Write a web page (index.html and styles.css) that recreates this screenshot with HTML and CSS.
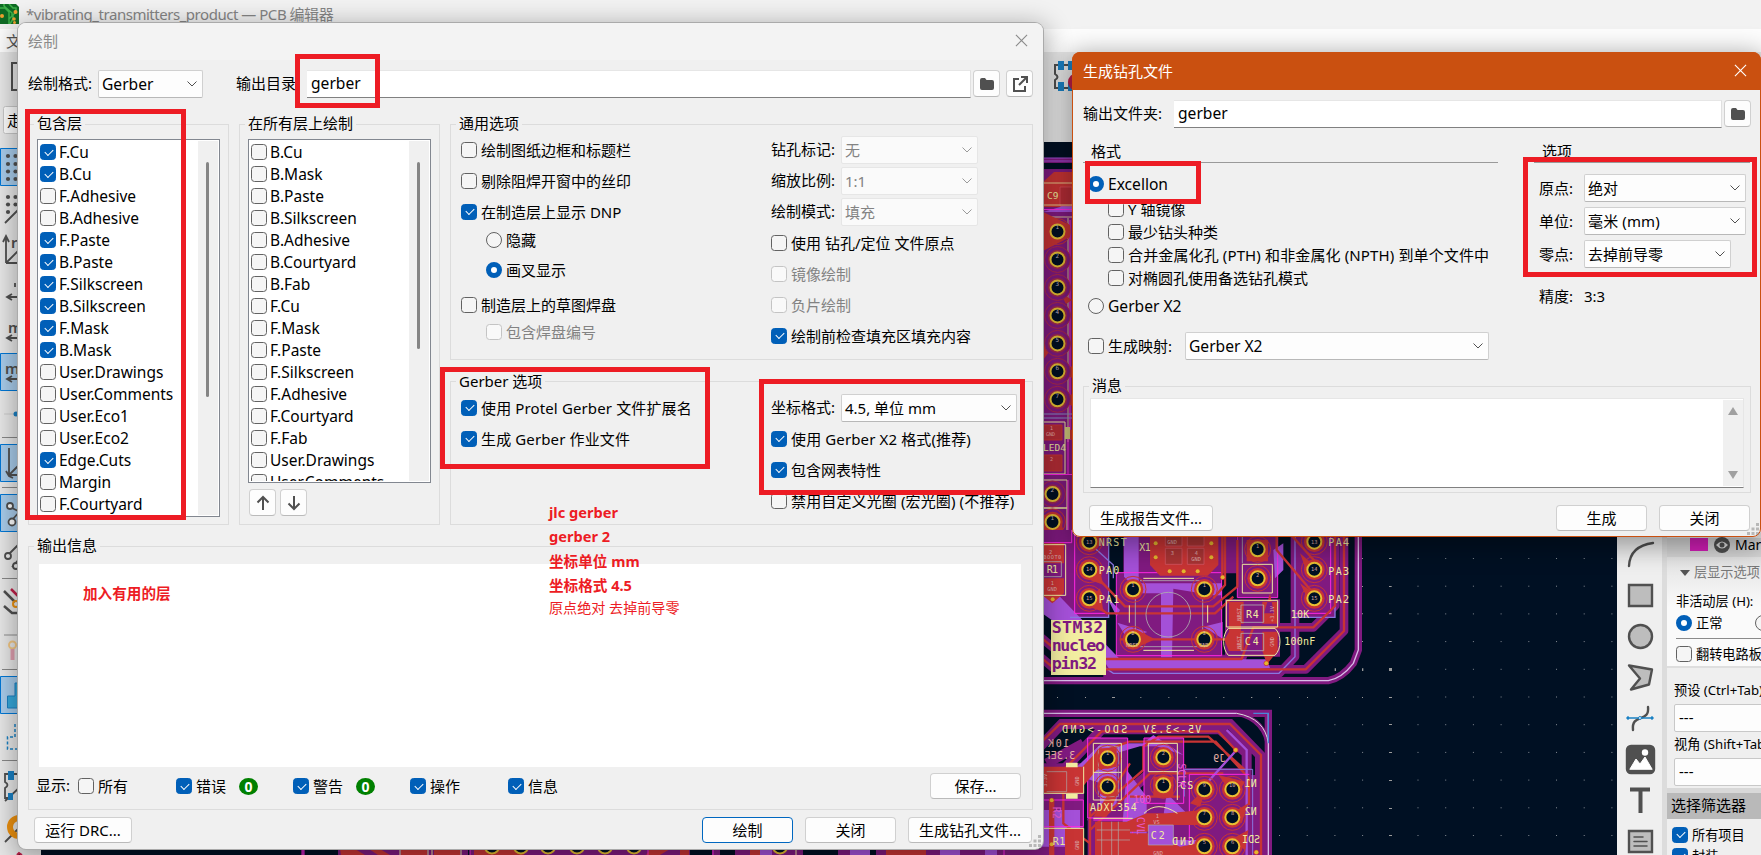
FILE: index.html
```html
<!DOCTYPE html>
<html lang="zh-CN">
<head>
<meta charset="utf-8">
<title>PCB 编辑器</title>
<link rel="stylesheet" href="styles.css">
</head>
<body>
<svg class="defs" width="0" height="0" aria-hidden="true">
  <defs>
    <g id="pad"><circle r="39" fill="none" stroke="#c83434" stroke-width="3"/><circle r="31" fill="#c83434"/><circle r="21" fill="#001023" stroke="#e8c033" stroke-width="6"/></g>
    <g id="hole"><circle r="39" fill="#801a80" stroke="#b02b4a" stroke-width="3"/><circle r="29" fill="#a02a50"/><circle r="21" fill="#001023" stroke="#e8c033" stroke-width="6"/></g>
    <g id="via"><circle r="8" fill="#c83434"/><circle r="6" fill="#e3b72e"/></g>
    <symbol id="folder" viewBox="0 0 14 14"><path d="M0 3q0-2 2-2h3l1.500 2H12q2 0 2 2v6q0 2-2 2H2q-2 0-2-2z" fill="#505050"/></symbol>
    <symbol id="chev" viewBox="0 0 10 6"><path d="M.5.5 5 5 9.500.5" fill="none" stroke="currentColor" stroke-width="1"/></symbol>
    <symbol id="close" viewBox="0 0 14 14"><path d="M1 1l12 12M13 1 1 13" fill="none" stroke="currentColor" stroke-width="1.200"/></symbol>
    <symbol id="grip" viewBox="0 0 12 12"><path d="M9 0h3v3H9zM9 4.500h3v3H9zM4.500 4.500h3v3h-3zM9 9h3v3H9zM4.500 9h3v3h-3zM0 9h3v3H0z" fill="#b8b8b8"/></symbol>
  </defs>
</svg>
<div class="desktop">
  <div class="app">
    <header class="app-title">
      <svg class="app-icon" width="19" height="20" viewBox="0 0 19 20"><path d="M0 0h16l3 3v17H0z" fill="#0f6b24"/><path d="M0 4h5l4 4v12M4 0v2l8 7v3l-3 3M9 0l4 4h3v4l-3 3v4l-3 5" fill="none" stroke="#3fb24a" stroke-width="1.500"/><g fill="#f0a030"><circle cx="2" cy="12" r="2"/><circle cx="15.500" cy="8" r="2"/><circle cx="14" cy="15" r="1.800"/><circle cx="14.500" cy="18.500" r="1.500"/></g></svg>
      <span>*vibrating_transmitters_product — PCB 编辑器</span>
    </header>
    <nav class="app-menu">文</nav>
    <div class="app-tools">
      <svg width="1761" height="90" viewBox="0 52 1761 90">
        <path d="M20 63h-8v27h8" fill="none" stroke="#505050" stroke-width="2"/>
        <path d="M1043.500 59v34M1043 142.500h40" stroke="#858585"/>
        <path d="M1074 65h-19v9q5 3 0 6v8h19" fill="none" stroke="#505050" stroke-width="2"/>
        <path d="M1058 61h6v9h-6zM1068 61h6v9h-6zM1058 82h6v9h-6zM1068 82h6v9h-6z" fill="#1a81c4"/>
        <circle cx="1077" cy="82" r="9" fill="#c0204a"/>
        <rect x="3.500" y="106.500" width="60" height="27" rx="2" fill="#fdfdfd" stroke="#c8c8c8"/>
      </svg>
      <span class="tool-combo">走</span>
    </div>
    <main class="app-main">
      <svg class="left-tools" width="41" height="713" viewBox="0 142 41 713">
        <g fill="#a9cdec" stroke="#0078d7"><path d="M.5 148.500h40v37H.5zM.5 353.500h40v37H.5zM.5 444.500h40v37H.5zM.5 494.500h40v37H.5zM.5 676.500h40v37H.5z"/></g>
        <g fill="#505050"><circle cx="8" cy="156" r="2.100"/><circle cx="15.500" cy="156" r="2.100"/><circle cx="8" cy="164" r="2.100"/><circle cx="15.500" cy="164" r="2.100"/><circle cx="8" cy="171.500" r="2.100"/><circle cx="15.500" cy="171.500" r="2.100"/><circle cx="8" cy="179" r="2.100"/><circle cx="15.500" cy="179" r="2.100"/><circle cx="8" cy="197" r="2.100"/><circle cx="15.500" cy="197" r="2.100"/><circle cx="8" cy="204.500" r="2.100"/><circle cx="15.500" cy="204.500" r="2.100"/><circle cx="8" cy="212" r="2.100"/></g>
        <g fill="none" stroke="#505050" stroke-width="1.800"><path d="M5 223l14-14M6 263v-24M3 242l3-6 3 6M6 263h14M7 262l13-13M15 283v4M20 297H8M12 294l-5 3 5 3M20 338H8M12 335l-5 3 5 3M20 379H8M12 376l-5 3 5 3M9 448v27h10M9 475l10-10M6 471l3 5 4 2"/><path d="M12 508l8 4M13 519l7-8M7 556l13-13M12 567l8-9"/><circle cx="10" cy="506" r="3" fill="#fff"/><circle cx="12" cy="522" r="3.500" fill="#fff"/><circle cx="8" cy="556" r="3" fill="#eee"/><circle cx="16" cy="566" r="3" fill="#eee"/><path d="M4 591l11 11M4 606l8 7h8" stroke-width="2.500"/><path d="M20 774H5v8q5 3 0 6v10h5M5 801l15-14M5 842l15-15"/></g>
        <path d="M2 437.500h18M2 487.500h18M2 578.500h18M2 669.500h18M2 760.500h18" stroke="#888"/>
        <path d="M11 589l9 9" stroke="#c0204a" stroke-width="2.500"/><circle cx="16" cy="604" r="3" fill="none" stroke="#ee9210" stroke-width="2"/>
        <path d="M4 635h16" stroke="#bbb" stroke-width="2"/><circle cx="12.500" cy="645" r="3.500" fill="none" stroke="#f3c885" stroke-width="2"/><path d="M12.500 649v11" stroke="#e0a0b0" stroke-width="4"/>
        <path d="M20 683h-5v13H7.500v12H20z" fill="#36a9dc" stroke="#1a81c4"/><path d="M20 724h-5v13H7.500v12H20z" fill="none" stroke="#1a81c4" stroke-width="1.500" stroke-dasharray="3 2"/>
        <path d="M8 771h6v9H8zM17 771h5v9h-5zM8 793h5v7H8z" fill="#1a81c4"/><circle cx="19" cy="827" r="9" fill="none" stroke="#ee9210" stroke-width="6"/>
        <path d="M4 414h16" stroke="#ccc"/><circle cx="16" cy="414" r="2.500" fill="#1a81c4"/><path d="M17 855l2-2 3 2" stroke="#c0204a" stroke-width="2"/>
        <text x="11" y="248" class="unit">r</text><text x="8" y="333" class="unit">m</text><text x="5" y="374" class="unit">m</text>
      </svg>
      <svg class="board" width="1576" height="713" viewBox="41 142 1576 713">
        <rect x="41" y="142" width="1576" height="713" fill="#001023"/>
        <!-- header strip beside the drill dialog -->
        <g>
          <path d="M1043 158h29v382h-29z" fill="#801a80"/>
          <path d="M1043 158h29M1043 161h29" stroke="#a450d8"/><path d="M1043 163h29v6h-29z" fill="#001023"/>
          <path d="M1043 182l11-10h18v35h-29z" fill="#c83434"/>
          <path d="M1043 212h29v-14l-12 9z" fill="#a450d8"/>
          <path d="M1060 187h12v19h-12z" fill="#b52d36" stroke="#e05060" stroke-width=".7"/>
          <path d="M1043 183h29M1043 205h29M1068 218v224M1043 217h29" fill="none" stroke="#f2eda1" stroke-width=".8"/>
          <path d="M1043 209.500h29M1070 220v220" stroke="#ff26e2" stroke-width="1" fill="none"/>
          <path d="M1043 212l27 13v12l-27 14zM1072 440v-10l-29-8v6zM1072 300l-12-8 6 12zM1043 360l12-16h-12zM1072 366l-9 6 9 6zM1072 394l-9 6 9 6z" fill="#c83434"/>
          <g transform="translate(1057.500 231.500) scale(.333)"><use href="#pad"/><use href="#hole" y="84"/><use href="#hole" y="168"/><use href="#hole" y="252"/><use href="#hole" y="336"/><use href="#hole" y="420"/><use href="#hole" y="504"/></g>
          <path d="M1043 414h29M1043 418h29" stroke="#8a8fc8" fill="none"/>
          <path d="M1043 422h22v52h-22zM1043 480h24v28h-24M1043 508h24v31h-24" fill="#801a80" stroke="#f2eda1"/>
          <path d="M1043 425h19v15h-19zM1043 455h19v16h-19z" fill="#b52d36" stroke="#c83434"/>
          <path d="M1068 426v48M1043 474.500h29M1068 480v60M1043 540h29" stroke="#ff26e2" fill="none"/>
          <rect x="1065" y="427" width="5" height="12" fill="#d6cd7e"/>
          <path d="M1044 515h16l4 20-9 16-12-10z" fill="#c83434"/>
          <g transform="translate(1052.500 494) scale(.333)"><use href="#hole"/><use href="#pad" y="84"/></g>
          <text x="1047" y="199" class="silk s9">C9</text><text x="1043" y="451" class="silk s9">LED4</text>
          <text x="1046" y="436" class="fine4">GND</text><text x="1050" y="430" class="fine4">1</text><text x="1050" y="461" class="fine4">2</text>
          <g class="pin-no"><text x="1055.500" y="229">1</text><text x="1055.500" y="258">2</text><text x="1055.500" y="286">3</text><text x="1055.500" y="314">4</text><text x="1055.500" y="342">5</text><text x="1055.500" y="370">6</text><text x="1055.500" y="398">7</text><text x="1050.500" y="492">2</text><text x="1050.500" y="520">1</text></g>
        </g>
        <g transform="translate(1040 530) scale(.33333)">
          <!-- upper board -->
          <path d="M0 0h955v360q-8 60-48 82-20 12-45 10H0z" fill="#001023"/>
          <g fill="none" stroke="#801a80" stroke-linejoin="round">
            <path d="M0 452H865Q905 445 940 400L955 360V0" stroke-width="22"/>
            <path d="M0 320 80 387H605L640 292H820L885 228V0M0 380 45 418H797L912 303V0M190 430H718L765 380V0" stroke-width="26"/>
          </g>
          <g fill="#801a80"><path d="M0 0h205v262H100L0 210zM230 128h316v249H230zM594 0h118v203H594zM102 0h104v262H102zM765 0h120v262H765zM555 208h165v172H555zM250 0h340v130H250zM35 270h165v165H35z"/></g>
          <g fill="#a450d8"><path d="M252 0h44v160h250v36H520l-120-20-4 206h-33V190H300l-48-50zM0 190l60 10 180 188h440l10 26-60 6H210l-36-52L0 245zM232 278l90 28-60 20zM490 290l58-14v50zM700 60l30-20v80l-25 25zM200 200l40 40-10 20z"/></g>
          <g fill="none" stroke="#8a76df" stroke-width="4"><path d="M206 0v262H90M885 0v262H765M765 0v380l-48 50H220l-30-20M160 50l60 55v40"/></g>
          <g fill="none" stroke="#d8bfe8" stroke-width="4"><path d="M0 452H865Q905 445 940 400L955 360V0"/></g>
          <g fill="none" stroke="#ff26e2" stroke-width="3"><path d="M229 128h316v249H229zM592 0v203h121V0M104 0v250h100M766 250h106V0M0 38h95V0"/></g>
          <path d="M330 0h205v105l-32 32H360l-30-32z" fill="#c83434"/>
          <g fill="#a93434" stroke="#d85a6a" stroke-width="2"><path d="M376 0h50v48h-50zM442 0h50v48h-50zM376 55h50v48h-50zM442 55h50v48h-50z"/></g>
          <g fill="none" stroke="#c83434" stroke-width="7" stroke-linejoin="round">
            <path d="M0 320 80 387H605L640 292H820L885 228V0M0 380 45 418H797L912 303V0M160 130 255 229H520L592 170V30M150 210 200 250H525L580 200M710 0v60L820 190M740 0l90 100M240 328h340M547 0v140M555 0v165l-35 40"/>
          </g>
          <g fill="#c83434"><path d="M130 225l60 20-10-70zM150 150l40 14-12-50zM280 358l65-30-65-34zM550 328l25-14v28zM780 160l60 42-30 18zM780 70l70 60-50-5zM620 30h64v64h-64zM0 40h72v60H0zM0 145h72v45l-35 30-37-30z"/><path d="M667 215h46v66h-46zM667 305h46v58l-32 40-14-40zM567 215h44v66h-8v22h8v60h-44l-14-33 14-25zM690 190l-18 60h30z"/></g>
          <g fill="none" stroke="#f2eda1" stroke-width="3"><path d="M0 44h77v152H0M310 145h152M310 361h152M268 226v52M503 226v52M559 211h154v80H559zM607 103h90v86h-90zM565 295h140q15 15 15 40t-15 41H565q-14-16-14-41t14-40z"/></g>
          <g fill="none" stroke="#afafaf" stroke-width="2.500"><path d="M286 152v196M300 350h190M488 152v196M300 152h190M607 0v100M603 225h68v52h-68zM603 310h68v52h-68zM10 95h54v45H10z"/><circle cx="385" cy="254" r="67"/></g>
          <use href="#pad" x="148" y="35"/><use href="#pad" x="148" y="119"/><use href="#pad" x="148" y="205"/>
          <use href="#pad" x="279" y="178"/><use href="#pad" x="493" y="178"/><use href="#pad" x="279" y="328"/><use href="#pad" x="493" y="328"/>
          <use href="#pad" x="653" y="58"/><use href="#pad" x="653" y="145"/>
          <use href="#pad" x="823" y="35"/><use href="#pad" x="823" y="119"/><use href="#pad" x="823" y="205"/>
          <use href="#via" x="38" y="208"/><use href="#via" x="548" y="142"/><use href="#via" x="679" y="400"/><use href="#via" x="347" y="40"/><use href="#via" x="347" y="82"/><use href="#via" x="514" y="40"/><use href="#via" x="514" y="82"/><use href="#via" x="389" y="124"/><use href="#via" x="431" y="124"/><use href="#via" x="473" y="124"/>
          <path d="M33 270h165v165H33z" fill="#f2eda1"/>
          <text x="35" y="309" class="board-label" textLength="155">STM32</text><text x="35" y="364" class="board-label" textLength="160">nucleo</text><text x="35" y="418" class="board-label" textLength="136">pin32</text>
          <g class="silk"><text x="176" y="48" textLength="84">NRST</text><text x="176" y="131" textLength="62">PA0</text><text x="176" y="219" textLength="62">PA1</text><text x="865" y="48" textLength="62">PA4</text><text x="865" y="134" textLength="62">PA3</text><text x="865" y="219" textLength="62">PA2</text><text x="298" y="63" textLength="34">X1</text><text x="752" y="263" textLength="56">10K</text><text x="733" y="345" textLength="93">100nF</text><text x="618" y="264" textLength="38">R4</text><text x="614" y="346" textLength="42">C4</text><text x="20" y="129" textLength="34">R1</text></g>
          <g class="fab"><text x="27" y="73">2</text><text x="10" y="87" textLength="54">BOOT0</text><text x="32" y="165">1</text><text x="22" y="184">GND</text><text x="138" y="42">13</text><text x="138" y="124">14</text><text x="138" y="210">15</text><text x="813" y="42">13</text><text x="813" y="124">14</text><text x="813" y="210">15</text><text x="274" y="170">1</text><text x="488" y="170">1</text><text x="274" y="316">2</text><text x="488" y="316">2</text><text x="648" y="53">1</text><text x="648" y="141">2</text><text x="382" y="43">GND</text><text x="454" y="94">GND</text><text x="392" y="75">3</text><text x="464" y="75">4</text><text x="258" y="350">NRST</text><text x="478" y="350">GND</text></g>
          <g class="fab"><text transform="translate(604 272) rotate(-90)">NRST</text><text transform="translate(604 356) rotate(-90)">NRST</text><text transform="translate(702 276) rotate(-90)">+3.3V</text><text transform="translate(702 350) rotate(-90)">GND</text></g>
          <!-- lower board -->
          <g fill="none" stroke="#801a80"><path d="M0 550h685v430" stroke-width="22"/><path d="M590 550Q680 570 686 660" stroke-width="14"/>
            <path d="M0 650 65 582H570L660 675V980M70 720 185 598H540L620 670V980M150 880l180-150h300M20 700 130 640" stroke-width="30"/></g>
          <g fill="#801a80"><path d="M143 624h120v240H143zM312 624h119v190H312zM433 735h215v245H433zM0 700h132v280H0zM143 800h300v180H143z"/></g>
          <g fill="#a450d8"><path d="M90 730l95-90h125l30-25 90 60-80-26h-50l-70 20v160H180v-70zM0 840h120v110H0zM260 720l60 80v180h-80zM380 790l60 60-70 10zM370 930h130v50H370z"/></g>
          <path d="M0 550h590M685 550v430" fill="none" stroke="#d8bfe8" stroke-width="4"/><path d="M590 550Q675 565 685 640" fill="none" stroke="#ddd" stroke-width="3"/><path d="M640 550h45v90" fill="none" stroke="#4a86d8" stroke-width="4"/>
          <g fill="none" stroke="#c83434" stroke-width="7"><path d="M0 640 60 582H570L663 675V980M70 720 185 604H535L587 660M187 665l80-30h260l100 110v80M150 860l160-140V650l45-30h150l110 100M150 900l180-170h220M270 800h150M150 820v160M70 720v160l80 60M230 760l40-60"/><path d="M35 810v170" stroke-width="16"/></g>
          <path d="M585 665 500 760M620 980V745M560 600l60 60v85" fill="none" stroke="#a450d8" stroke-width="7"/>
          <g fill="none" stroke="#ff26e2" stroke-width="3"><path d="M143 624h120v240H143zM312 624h119v196H312zM448 980V733h180M160 870h118v110M0 810h130v80H0"/></g>
          <path d="M433 800v-82h205v262" fill="none" stroke="#8a76df" stroke-width="3"/>
          <g fill="#c83434"><path d="M70 770l110-115h50v55l-60 10-50 60zM0 710h130v80H0zM160 860l60-90 20 10-40 80zM320 850h60l110-10v45H380l-60 20h-60v-30zM260 910h80l80 40 80-15v45H260zM535 735l80 20-30 50zM450 820l50-50-20 60zM575 850l50-30-20 60zM570 930l55-30-10 60zM340 740h60v60h-60zM165 875h105v105H165zM75 895h55v85H75z"/></g>
          <g fill="none" stroke="#f2eda1" stroke-width="3"><path d="M160 640h84v170h-84zM160 727h84M325 640h87v170M325 640v85h87M0 790h131v-80M0 895h131v80M160 865h118M312 850q40-40 100 0"/></g>
          <path d="M78 698h35v14H78zM78 792h35v14H78z" fill="#f2eda1"/>
          <g fill="none" stroke="#afafaf" stroke-width="2"><path d="M175 650h60v150h-60zM185 875v105M215 875v105M235 875v105M170 900h100M170 930h100M20 725h60v60H20"/></g>
          <path d="M325 885h75v60h-75z" fill="#a450d8" stroke="#afafaf" stroke-width="2"/>
          <use href="#pad" x="203" y="685"/><use href="#pad" x="203" y="769"/><use href="#pad" x="370" y="682"/><use href="#pad" x="370" y="766"/>
          <use href="#pad" x="493" y="778"/><use href="#pad" x="577" y="778"/><use href="#pad" x="493" y="862"/><use href="#pad" x="577" y="862"/><use href="#pad" x="493" y="949"/><use href="#pad" x="577" y="949"/>
          <use href="#via" x="587" y="660"/><use href="#via" x="35" y="811"/><use href="#via" x="35" y="943"/><use href="#via" x="649" y="967"/>
          <g class="silk"><text transform="translate(262 610) scale(-1 1)" textLength="196">SDO-&gt;GND</text><text transform="translate(484 610) scale(-1 1)" textLength="174">V5-&gt;3.3V</text><text x="420" y="776" textLength="40">CS</text><text x="332" y="928" textLength="42">C2</text><text x="38" y="945" textLength="38">R1</text><text transform="translate(462 945) scale(-1 1)" textLength="66">GND</text><text transform="translate(650 771) scale(-1 1)">N1</text><text transform="translate(650 855) scale(-1 1)">N2</text><text transform="translate(660 940) scale(-1 1)">SDI</text><text x="150" y="844" textLength="140">ADXL354</text></g>
          <g class="silk mirror"><text transform="translate(88 652) scale(-1 1)" textLength="64">10K</text><text transform="translate(106 688) scale(-1 1)" textLength="92">3.3EF</text><text transform="translate(556 696) scale(-1 1)">J9</text></g>
          <g class="silk hot"><text transform="translate(414 700) rotate(90)">SCLK</text><text x="280" y="820">100</text><text transform="translate(40 830) rotate(90)">R2</text><text transform="translate(290 860) rotate(90)">CVL</text></g>
          <g class="fab"><text x="198" y="674">1</text><text x="198" y="759">2</text><text x="365" y="674">2</text><text x="365" y="759">1</text><text x="488" y="770">9</text><text x="567" y="770">10</text><text x="488" y="855">7</text><text x="573" y="855">8</text><text x="488" y="941">5</text><text x="573" y="941">6</text><text x="347" y="863">1</text><text x="340" y="882">VS</text><text x="340" y="974">GND</text><text transform="translate(118 768) rotate(-90)">GND</text><text transform="translate(20 770) rotate(-90)">3.3V</text><text transform="translate(118 960) rotate(-90)">GND</text></g>
          <!-- grid dots -->
          <g fill="#9a9a9a"><path d="M966 84h3v3h-3zM1047 84h8v3h-8zM966 168h3v3h-3zM1047 168h8v3h-8zM966 250h3v3h-3zM1047 250h8v3h-8zM966 333h3v3h-3zM1047 333h8v3h-8zM884 415h4v8h-4zM966 415h4v8h-4zM1047 414h9v9h-9zM51 501h3v3h-3zM135 501h3v3h-3zM216 501h9v3h-9zM301 501h3v3h-3zM385 501h3v3h-3zM467 501h3v3h-3zM550 501h3v3h-3zM633 501h4v3h-4zM717 501h3v3h-3zM801 501h3v3h-3zM885 501h3v3h-3zM966 501h3v3h-3zM1047 501h9v3h-9z"/></g>
        </g>
        <defs><pattern id="dots" x="1279" y="558" width="27.700" height="27.700" patternUnits="userSpaceOnUse"><path d="M0 0h1v1H0z" fill="#858b93"/></pattern></defs>
        <rect x="1394" y="538" width="223" height="317" fill="url(#dots)"/><path d="M1279 723h108v132h-108z" fill="url(#dots)"/>
        <path d="M1389 697h3v1h-3zM1389 724h3v1h-3zM1389 752h3v1h-3zM1389 780h3v1h-3zM1389 808h3v1h-3zM1389 835h3v1h-3z" fill="#9a9a9a"/>
        <!-- lower edge below the plot dialog -->
        <g><path d="M301 849h4v6h-4zM338 849h62v6h-62zM398 849h70v6h-70zM470 849h220v6H470zM712 849h8v6h-8zM735 849h68v6h-68zM838 849h28v6h-28zM876 849h167v6H876z" fill="#801a80"/><path d="M340 849h15l10 6h-24zM369 849h11l10 6h-12zM401 849h26v6h-26zM434 849h26v6h-26zM474 849h50v6h-50zM650 849h20l-10 6h-14zM680 849h9v6h-9zM750 849h12v6h-12zM886 849h40v6h-40z" fill="#c83434"/><path d="M303 849v6M470 849v6M648 849v6M713 849v6M1004 849v6" stroke="#ff26e2"/><path d="M400 849v6M428 849v6M432 849v6M461 849v6M796 849v6M954 849v6" stroke="#f2eda1"/><path d="M760 849h12v6h-12zM850 849h20v6h-20zM940 849h20v6h-20zM985 849h12v6h-12z" fill="#a450d8"/>
        <g fill="#001023" stroke="#e8c033" stroke-width="2"><circle cx="492" cy="846" r="7.500"/><circle cx="521" cy="846" r="7.500"/><circle cx="548" cy="846" r="7.500"/><circle cx="577" cy="846" r="7.500"/><circle cx="605" cy="846" r="7.500"/><circle cx="634" cy="846" r="7.500"/><circle cx="780" cy="846" r="7.500"/></g></g>
      </svg>
      <aside class="draw-tools">
        <svg width="45" height="317" viewBox="1617 538 45 317" fill="none" stroke="#505050" stroke-width="2.400" stroke-linecap="round" stroke-linejoin="round">
          <path d="M1629 566q1-20 24-23"/>
          <path d="M1629 585h23v21h-23z" fill="#bdbdbd" stroke-linejoin="miter"/>
          <circle cx="1640.500" cy="636.500" r="11.500" fill="#bdbdbd"/>
          <path d="M1629 665.500l23 4-3 15-18 5 9-11z" fill="#bdbdbd"/>
          <path d="M1648 707c2 16-17 6-15 23"/><path d="M1627 718h26" stroke="#1a81c4" stroke-width="1.600"/><path d="M1628 717.500v1M1652 717.500v1" stroke="#1a81c4"/><circle cx="1640" cy="718" r="1.500" fill="#fff" stroke="#1a81c4" stroke-width="1"/>
          <rect x="1627" y="746" width="27" height="27" rx="4" fill="#505050"/><path d="M1630 769l6-10 4 5 5-7 7 12z" fill="#fff" stroke="#fff" stroke-width="1"/><circle cx="1645" cy="752.500" r="3.200" fill="#fff" stroke="none"/>
          <path d="M1630 789.500h20M1640.500 790v23" stroke-width="4" stroke-linecap="butt"/>
          <path d="M1629 831h23v21h-23z" fill="#bdbdbd" stroke-linejoin="miter"/><path d="M1634 837h9M1634 841.500h13M1634 846h13" stroke-width="1.500"/>
        </svg>
      </aside>
      <aside class="side-panel">
        <div class="layer-row"><i class="swatch"></i><svg width="16" height="16" viewBox="0 0 16 16"><circle cx="8" cy="8" r="8" fill="#505050"/><path d="M2 8q6-7 12 0-6 7-12 0z" fill="#ddd"/><circle cx="8" cy="8" r="2.500" fill="#505050"/></svg><span>Margin</span></div>
        <div class="layer-options">
          <div class="disclosure"><i></i>层显示选项</div>
          <div class="so-label">非活动层 (H):</div>
          <div class="so-radios"><i class="rb on"></i><span>正常</span><i class="rb"></i></div>
          <div class="so-flip"><i class="cb"></i><span>翻转电路板</span></div>
        </div>
        <div class="presets">
          <div class="pl">预设 (Ctrl+Tab):</div><div class="pc">---</div>
          <div class="pl">视角 (Shift+Tab):</div><div class="pc">---</div>
        </div>
        <div class="filter-title">选择筛选器</div>
        <div class="filter-row"><i class="cb on"></i><span>所有项目</span></div>
        <div class="filter-row"><i class="cb on"></i><span>封装</span></div>
      </aside>
    </main>
  </div>

  <section class="window plot">
    <header class="titlebar"><span>绘制</span><svg width="13" height="13"><use href="#close"/></svg></header>
    <div class="path-row">
      <label class="w70">绘制格式:</label><div class="combo fmt latin">Gerber<svg><use href="#chev"/></svg></div>
      <label class="out">输出目录:</label><div class="input latin">gerber</div>
      <button class="icon-btn"><svg width="14" height="14"><use href="#folder"/></svg></button>
      <button class="icon-btn second"><svg width="16" height="16" viewBox="0 0 16 16" fill="none" stroke="#505050" stroke-width="2"><path d="M7 3H2v12h11v-5M9 1h6v6M15 1 7 9"/></svg></button>
    </div>
    <div class="columns">
      <fieldset class="layers"><legend>包含层</legend>
        <div class="list full"><div class="rows">
          <p><i class="cb on"></i>F.Cu</p><p><i class="cb on"></i>B.Cu</p><p><i class="cb"></i>F.Adhesive</p><p><i class="cb"></i>B.Adhesive</p><p><i class="cb on"></i>F.Paste</p><p><i class="cb on"></i>B.Paste</p><p><i class="cb on"></i>F.Silkscreen</p><p><i class="cb on"></i>B.Silkscreen</p><p><i class="cb on"></i>F.Mask</p><p><i class="cb on"></i>B.Mask</p><p><i class="cb"></i>User.Drawings</p><p><i class="cb"></i>User.Comments</p><p><i class="cb"></i>User.Eco1</p><p><i class="cb"></i>User.Eco2</p><p><i class="cb on"></i>Edge.Cuts</p><p><i class="cb"></i>Margin</p><p><i class="cb"></i>F.Courtyard</p>
        </div><div class="track"><b class="thumb long"></b></div></div>
      </fieldset>
      <fieldset class="layers"><legend>在所有层上绘制</legend>
        <div class="list short"><div class="rows">
          <p><i class="cb"></i>B.Cu</p><p><i class="cb"></i>B.Mask</p><p><i class="cb"></i>B.Paste</p><p><i class="cb"></i>B.Silkscreen</p><p><i class="cb"></i>B.Adhesive</p><p><i class="cb"></i>B.Courtyard</p><p><i class="cb"></i>B.Fab</p><p><i class="cb"></i>F.Cu</p><p><i class="cb"></i>F.Mask</p><p><i class="cb"></i>F.Paste</p><p><i class="cb"></i>F.Silkscreen</p><p><i class="cb"></i>F.Adhesive</p><p><i class="cb"></i>F.Courtyard</p><p><i class="cb"></i>F.Fab</p><p><i class="cb"></i>User.Drawings</p><p><i class="cb"></i>User.Comments</p>
        </div><div class="track"><b class="thumb"></b></div></div>
        <div class="order-btns">
          <button class="icon-btn"><svg width="14" height="16" viewBox="0 0 14 16" fill="none" stroke="#505050" stroke-width="2"><path d="M7 15V2M1.500 7.500 7 2l5.500 5.500"/></svg></button>
          <button class="icon-btn"><svg width="14" height="16" viewBox="0 0 14 16" fill="none" stroke="#505050" stroke-width="2"><path d="M7 1v13M1.500 8.500 7 14l5.500-5.500"/></svg></button>
        </div>
      </fieldset>
      <div class="settings">
        <fieldset class="general"><legend>通用选项</legend>
          <div class="two-col">
            <div>
              <p class="opt"><i class="cb"></i>绘制图纸边框和标题栏</p>
              <p class="opt"><i class="cb"></i>剔除阻焊开窗中的丝印</p>
              <p class="opt"><i class="cb on"></i>在制造层上显示 DNP</p>
              <p class="opt sub r1"><i class="rb"></i>隐藏</p>
              <p class="opt sub r2"><i class="rb on"></i>画叉显示</p>
              <p class="opt r3"><i class="cb"></i>制造层上的草图焊盘</p>
              <p class="opt sub r4 off"><i class="cb"></i>包含焊盘编号</p>
            </div>
            <div>
              <p class="opt"><label>钻孔标记:</label><span class="combo dim">无<svg><use href="#chev"/></svg></span></p>
              <p class="opt"><label>缩放比例:</label><span class="combo dim">1:1<svg><use href="#chev"/></svg></span></p>
              <p class="opt"><label>绘制模式:</label><span class="combo dim">填充<svg><use href="#chev"/></svg></span></p>
              <p class="opt"><i class="cb"></i>使用 钻孔/定位 文件原点</p>
              <p class="opt off"><i class="cb"></i>镜像绘制</p>
              <p class="opt off"><i class="cb"></i>负片绘制</p>
              <p class="opt"><i class="cb on"></i>绘制前检查填充区填充内容</p>
            </div>
          </div>
        </fieldset>
        <fieldset class="gerber"><legend>Gerber 选项</legend>
          <div class="two-col">
            <div><p class="opt mixed"><i class="cb on"></i>使用 Protel Gerber 文件扩展名</p><p class="opt mixed"><i class="cb on"></i>生成 Gerber 作业文件</p></div>
            <div>
              <p class="opt"><label>坐标格式:</label><span class="combo wide">4.5, 单位 mm<svg><use href="#chev"/></svg></span></p>
              <p class="opt mixed"><i class="cb on"></i>使用 Gerber X2 格式(推荐)</p><p class="opt"><i class="cb on"></i>包含网表特性</p><p class="opt mixed"><i class="cb"></i>禁用自定义光圈 (宏光圈) (不推荐)</p>
            </div>
          </div>
        </fieldset>
      </div>
    </div>
    <fieldset class="output"><legend>输出信息</legend>
      <div class="log"></div>
      <div class="show-row">
        <label>显示:</label><span class="f1"><i class="cb"></i>所有</span><span class="f2"><i class="cb on"></i>错误<em>0</em></span><span class="f2"><i class="cb on"></i>警告<em>0</em></span><span class="f3"><i class="cb on"></i>操作</span><span class="f4"><i class="cb on"></i>信息</span><button class="btn w91">保存...</button>
      </div>
    </fieldset>
    <footer class="buttons"><button class="btn drc">运行 DRC...</button><button class="btn w91 primary">绘制</button><button class="btn w91">关闭</button><button class="btn gen">生成钻孔文件...</button></footer>
    <svg class="grip"><use href="#grip"/></svg>
  </section>

  <section class="window drill">
    <header class="titlebar"><span>生成钻孔文件</span><svg width="13" height="13"><use href="#close"/></svg></header>
    <div class="path-row"><label class="w91l">输出文件夹:</label><div class="input latin">gerber</div><button class="icon-btn"><svg width="14" height="14"><use href="#folder"/></svg></button></div>
    <div class="drill-cols">
      <div class="fmt-col">
        <h3>格式</h3>
        <p class="opt ex latin"><i class="rb on"></i>Excellon</p>
        <p class="opt in"><i class="cb"></i>Y 轴镜像</p><p class="opt in"><i class="cb"></i>最少钻头种类</p><p class="opt in mixed"><i class="cb"></i>合并金属化孔 (PTH) 和非金属化 (NPTH) 到单个文件中</p><p class="opt in"><i class="cb"></i>对椭圆孔使用备选钻孔模式</p>
        <p class="opt gx latin"><i class="rb"></i>Gerber X2</p>
        <p class="opt map"><i class="cb"></i><label>生成映射:</label><span class="combo latin">Gerber X2<svg><use href="#chev"/></svg></span></p>
      </div>
      <div class="opt-col">
        <h3>选项</h3>
        <p><label>原点:</label><span class="combo">绝对<svg><use href="#chev"/></svg></span></p>
        <p><label>单位:</label><span class="combo mixed">毫米 (mm)<svg><use href="#chev"/></svg></span></p>
        <p><label>零点:</label><span class="combo narrow">去掉前导零<svg><use href="#chev"/></svg></span></p>
        <p class="prec"><label>精度:</label>3:3</p>
      </div>
    </div>
    <fieldset class="msg"><legend>消息</legend><div class="textarea"><div class="arrows"><i></i><i></i></div></div></fieldset>
    <footer class="buttons"><button class="btn rep">生成报告文件...</button><button class="btn w91">生成</button><button class="btn w91">关闭</button></footer>
    <svg class="grip"><use href="#grip"/></svg>
  </section>

  <!-- red markup laid over the windows -->
  <div class="mark m-dir"></div><div class="mark m-layers"></div><div class="mark m-gerber"></div><div class="mark m-coord"></div><div class="mark m-excellon"></div><div class="mark m-options"></div>
  <div class="note n-main"><b>jlc gerber</b><b>gerber 2</b><b>坐标单位 mm</b><b>坐标格式 4.5</b><span>原点绝对 去掉前导零</span></div>
  <div class="note n-layers"><b>加入有用的层</b></div>
</div>
</body>
</html>
```
FILE: styles.css
```css
* { box-sizing: border-box; }
body { margin: 0; font: 15px/20px "Noto Sans", "Noto Sans CJK SC", sans-serif; color: #000; }
p, h3 { margin: 0; font-weight: 400; font-size: inherit; }
svg { flex: none; display: block; }
svg.defs { position: absolute; }
button { font: inherit; color: inherit; padding: 0; }
label, span { white-space: nowrap; }
.desktop { position: relative; width: 1761px; height: 855px; overflow: hidden; background: #e9e9e9; }

/* editor behind the dialogs */
.app { display: flex; flex-direction: column; height: 855px; }
.app-title { height: 29px; flex: none; display: flex; align-items: center; gap: 7px; background: #f2f2f2; color: #858585; letter-spacing: -.47px; }
.app-title span { padding-bottom: 1px; }
.app-icon { margin-top: -1px; }
.app-menu { height: 23px; flex: none; background: #fdfdfd; padding: 2px 6px; color: #555; }
.app-tools { height: 90px; flex: none; background: #e8e8e8; position: relative; }
.tool-combo { position: absolute; left: 7px; top: 58px; }
.app-main { display: flex; height: 713px; }
.left-tools { background: #e8e8e8; }
.unit { font: 600 15px "Noto Sans", sans-serif; fill: #505050; }
.draw-tools { width: 45px; padding-top: 396px; background: #efefef; }
.side-panel { width: 99px; flex: none; height: 713px; overflow: hidden; border-left: 5px solid #dcdcdc; padding-top: 396px; background: #efefef; white-space: nowrap; font-size: 13.200px; }
.layer-row { height: 19px; padding-left: 23px; display: flex; align-items: center; background: #d6d6d6; line-height: 14px; font-size: 14px; }
.layer-row .swatch { width: 18px; height: 13px; margin: -6px 6px 0 0; background: #d41fb8; flex: none; }
.layer-row svg { margin-top: -5px; }
.layer-row span { margin: -5px 0 0 5px; }
.layer-options { height: 111px; padding-left: 9px; background: #fafafa; border-bottom: 2px solid #dedede; background-image: linear-gradient(#e3e3e3, #fafafa 50px); }
.disclosure { display: flex; align-items: center; height: 30px; color: #777; }
.disclosure i { border: 5px solid transparent; border-top: 6px solid #555; border-bottom: 0; margin: 2px 4px 0; }
.so-label { height: 29px; line-height: 29px; }
.so-radios, .so-flip { display: flex; align-items: center; gap: 4px; }
.so-radios { margin-bottom: 1px; padding-bottom: 8px; box-sizing: content-box; height: 14px; border-bottom: 1px solid #8a8a8a; }
.so-radios .rb:last-child { margin-left: 29px; }
.so-flip { height: 27px; }
.presets { padding: 10px 0 0 7px; box-sizing: content-box; height: 110px; border-bottom: 5px solid #d8d8d8; }
.pl { height: 26px; line-height: 24px; }
.pc { height: 28px; width: 140px; padding: 2px 4px; border: 1px solid #c8c8c8; border-radius: 2px; background: #fdfdfd; font-size: 15px; }
.filter-title { height: 26px; line-height: 25px; padding-left: 4px; background: #b9b9b9; font-size: 15px; }
.filter-row { display: flex; align-items: center; gap: 4px; padding: 7px 0 0 5px; height: 24px; }
.filter-row + .filter-row { padding-top: 2px; }

/* board artwork text */
.silk { font: 30px "DejaVu Sans Mono", monospace; fill: #f2eda1; }
.silk.s9 { font-size: 9.500px; }
.silk.mirror { fill: #e8b2a7; }
.silk.hot { fill: #e85ad0; }
.board-label { font: 700 50px "DejaVu Sans Mono", monospace; fill: #801a80; }
.fab { font: 16px "DejaVu Sans Mono", monospace; fill: #d8a8a8; }
.pin-no { font: 6px "DejaVu Sans Mono", monospace; fill: #c0b4c4; }
.fine4 { font: 5px "DejaVu Sans Mono", monospace; fill: #e8a8a8; }

/* controls */
.latin { font-size: 15.600px; }
.mixed { letter-spacing: .13px; }
.cb, .rb { flex: none; display: inline-block; position: relative; width: 16px; height: 16px; border: 1px solid #626262; border-radius: 3.500px; background: #f5f5f5; }
.rb { border-radius: 50%; }
.cb.on { background: #005fb8; border-color: #005fb8; }
.cb.on::after { content: ""; position: absolute; left: 3.500px; top: 3.500px; width: 7px; height: 4px; border: solid #fff; border-width: 0 0 1px 1px; transform: rotate(-45deg); }
.rb.on { border: 5px solid #005fb8; background: #fff; }
.combo { display: flex; align-items: center; justify-content: space-between; height: 28px; padding: 0 5px 0 3px; border: 1px solid #d0d0d0; border-bottom-color: #b8b8b8; border-radius: 2px; background: #fdfdfd; }
.combo svg { width: 10px; height: 6px; color: #505050; }
.input { flex: 1; height: 28px; padding: 3px 4px; background: #fff; border-top: 1px solid #e6e6e6; border-right: 1px solid #e0e0e0; border-bottom: 1px solid #808080; line-height: 19px; }
.icon-btn { width: 27px; height: 27px; display: flex; align-items: center; justify-content: center; background: #fdfdfd; border: 1px solid #d0d0d0; border-bottom-color: #bababa; border-radius: 4px; }
.btn { height: 26px; background: #fdfdfd; border: 1px solid #d0d0d0; border-bottom-color: #bababa; border-radius: 4px; line-height: 22px; white-space: nowrap; }
.w91 { width: 91px; }
.primary { border-color: #0067c0; }
fieldset { min-width: 0; margin: 0; padding: 0; border: 1px solid #dcdcdc; }
legend { height: 20px; line-height: 18px; padding: 0 3px; margin-left: 5px; white-space: nowrap; }
.opt { display: flex; align-items: center; height: 31px; gap: 4px; white-space: nowrap; }
.off { color: #838383; }
.off .cb { border-color: #c4c4c4; background: #f9f9f9; }

/* dialogs */
.window { position: absolute; background: #f0f0f0; border-radius: 8px; box-shadow: 0 0 0 1px #aaa, 0 6px 26px 4px rgba(0,0,0,.32); display: flex; flex-direction: column; }
.titlebar { height: 38px; flex: none; display: flex; align-items: center; justify-content: space-between; background: #f3f3f3; color: #8a8a8a; padding: 0 15px 0 10px; border-radius: 8px 8px 0 0; }
.path-row { display: flex; align-items: center; }
.path-row label { padding-bottom: 2px; }
.path-row .icon-btn { margin-bottom: 1px; }
.grip { position: absolute; right: 2px; bottom: 2px; width: 12px; height: 12px; }
.plot { left: 18px; top: 23px; width: 1025px; height: 826px; }
.plot .titlebar { height: 37px; padding-bottom: 2px; }
.plot .path-row { padding: 10px 10px 0; height: 38px; }
.w70 { width: 70px; }
.fmt { width: 105px; }
.out { width: 71px; margin-left: 33px; }
.plot .icon-btn { margin-left: 2px; }
.plot .icon-btn.second { margin-left: 6px; }
.columns { display: flex; gap: 10px; height: 411px; margin: 16px 10px 0; flex: none; }
.layers { width: 201px; height: 411px; }
.list { display: flex; justify-content: space-between; margin: 5px 0 0 8px; width: 183px; border: 1px solid #828790; background: #fff; padding: 1px; overflow: hidden; }
.list.full { height: 378px; }
.list.short { height: 344px; }
.rows p { display: flex; align-items: center; gap: 3px; height: 22px; padding-left: 1px; white-space: nowrap; font-size: 15.500px; }
.list .rows { overflow: hidden; }
.track { width: 20px; background: #f0f0f0; padding: 21px 0 0 8px; }
.thumb { display: block; width: 3px; height: 187px; border-radius: 2px; background: #858585; }
.thumb.long { height: 235px; }
.order-btns { display: flex; gap: 4px; margin: 6px 0 0 9px; }
.plot .order-btns .icon-btn { margin: 0; }
.settings { width: 583px; display: flex; flex-direction: column; gap: 11px; }
.general { height: 246px; }
.gerber { height: 154px; }
.gerber legend { line-height: 20px; }
.two-col { display: grid; grid-template-columns: 310px 1fr; padding-left: 10px; }
.gerber .two-col { padding-top: 1px; }
.two-col label { width: 66px; padding-bottom: 1px; }
.sub { padding-left: 25px; }
.r1 { height: 25px; }
.r2 { height: 36px; }
.r3 { height: 33px; }
.r4 { height: 21px; }
.combo.dim { width: 137px; color: #838383; background: #fafafa; border-color: #e6e6e6; }
.dim svg { color: #9a9a9a; }
.combo.wide { width: 176px; }
.output { margin: 11px 10px 0; height: 274px; flex: none; }
.log { height: 203px; margin: 8px 11px 0 10px; background: #fff; }
.show-row { display: flex; align-items: center; height: 38px; padding: 0 11px 0 7px; }
.show-row span { display: flex; align-items: center; gap: 4px; }
.show-row label { width: 42px; padding-bottom: 2px; }
.f1 { width: 98px; }
.f2 { width: 117px; }
.f3 { width: 98px; }
.f4 { flex: 1; }
.show-row em { width: 19px; height: 17px; margin-left: 9px; border-radius: 50%; background: #008000; color: #fff; font: 700 14px/17px "Noto Sans", sans-serif; text-align: center; }
.buttons { display: flex; }
.plot .buttons { margin: 7px 11px 0 16px; gap: 12px; }
.drc { width: 98px; margin-right: auto; }
.gen { width: 124px; }

.drill { left: 1072px; top: 52px; width: 689px; height: 485px; box-shadow: 0 6px 26px 4px rgba(0,0,0,.36); }
.drill::after { content: ""; position: absolute; inset: 0; border: 1px solid #ca5010; border-radius: 8px; pointer-events: none; }
.drill .titlebar { background: #ca5010; color: #fff; padding: 0 14px 1px 11px; }
.drill .path-row { height: 38px; padding: 10px 10px 0 11px; flex: none; }
.w91l { width: 91px; }
.drill .icon-btn { margin-left: 2px; }
.drill-cols { display: flex; justify-content: space-between; padding: 14px 11px 0; height: 248px; flex: none; }
.fmt-col { width: 415px; }
.opt-col { width: 216px; }
h3 { height: 21px; line-height: 19px; padding-left: 8px; border-bottom: 1px solid #9a9a9a; }
.ex { height: 35px; margin: 3px 0 0 5px; }
.in { height: 23px; margin-left: 25px; }
.drill .in:nth-of-type(2) { margin-top: -4px; }
.gx { height: 30px; margin: 2px 0 0 5px; }
.map { height: 30px; margin: 10px 0 0 5px; }
.map label { width: 73px; }
.map .combo { width: 304px; }
.opt-col p { display: flex; align-items: center; height: 33px; padding-left: 5px; }
.opt-col h3 + p { margin-top: 8px; }
.opt-col label { width: 45px; }
.opt-col .combo { width: 162px; }
.opt-col .narrow { width: 147px; }
.opt-col .prec { margin-top: 9px; }
.msg { margin: 0 10px 0 11px; height: 117px; flex: none; }
.textarea { height: 90px; margin: 2px 6px 0; background: #fff; border: 1px solid #e6e6e6; border-bottom-color: #808080; display: flex; justify-content: flex-end; padding: 1px 0; }
.arrows { width: 20px; background: #f0f0f0; display: flex; flex-direction: column; justify-content: space-between; align-items: center; padding: 7px 0; }
.arrows i { border: 5px solid transparent; border-bottom: 8px solid #a0a0a0; border-top: 0; }
.arrows i + i { transform: rotate(180deg); }
.drill .buttons { margin: 12px 11px 0 17px; gap: 12px; }
.rep { width: 124px; margin-right: auto; }

/* markup */
.mark { position: absolute; border: 5px solid #ed1c24; }
.m-dir { left: 295px; top: 54px; width: 85px; height: 54px; }
.m-layers { left: 25px; top: 109px; width: 161px; height: 411px; }
.m-gerber { left: 440px; top: 367px; width: 270px; height: 102px; }
.m-coord { left: 759px; top: 379px; width: 266px; height: 116px; }
.m-excellon { left: 1085px; top: 161px; width: 116px; height: 43px; }
.m-options { left: 1523px; top: 157px; width: 234px; height: 120px; }
.note { position: absolute; color: #ed1c24; font-size: 14.600px; display: flex; flex-direction: column; }
.note b, .note span { height: 24.400px; line-height: 24.400px; white-space: nowrap; }
.note span { font-size: 14.100px; margin-top: -2px; }
.n-main { left: 549px; top: 500px; }
.n-layers { left: 83px; top: 581px; }
```
